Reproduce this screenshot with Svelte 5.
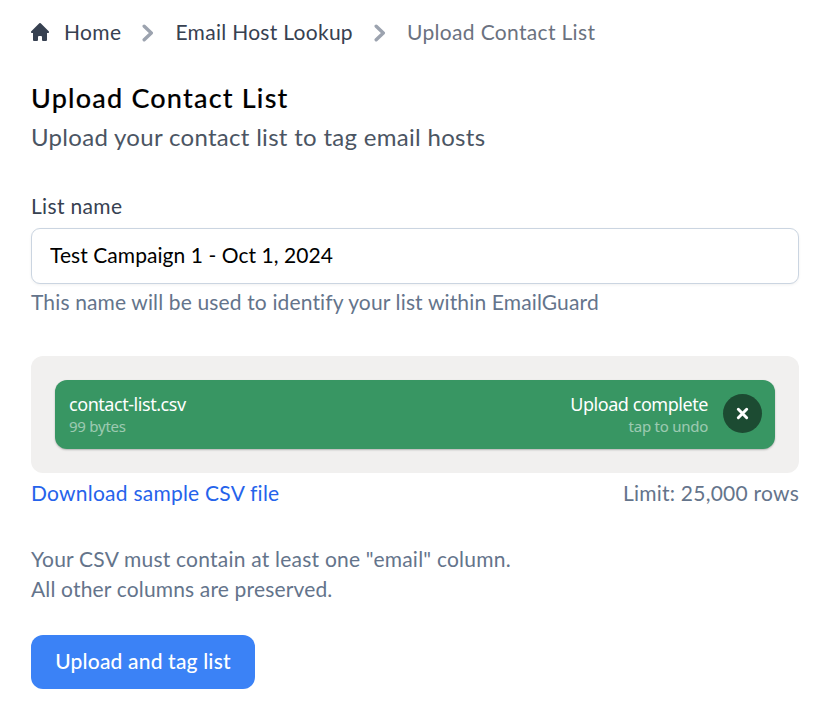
<script>
  let listName = $state('Test Campaign 1 - Oct 1, 2024');
</script>

<main>
  <nav aria-label="Breadcrumb">
    <svg class="home" viewBox="0 0 20 20" fill="currentColor"><path d="M10.707 1.293a1 1 0 0 0-1.414 0l-8 8A1 1 0 0 0 2 11h1v7a1 1 0 0 0 1 1h3a1 1 0 0 0 1-1v-3a1 1 0 0 1 1-1h2a1 1 0 0 1 1 1v3a1 1 0 0 0 1 1h3a1 1 0 0 0 1-1v-7h1a1 1 0 0 0 .707-1.707z" /></svg>
    <a class="c1" href="#home">Home</a>
    <svg class="chev" viewBox="0 0 12 18"><path d="M2.2 2.2 9.3 9 2.2 15.8" /></svg>
    <a class="c2" href="#lookup">Email Host Lookup</a>
    <svg class="chev" viewBox="0 0 12 18"><path d="M2.2 2.2 9.3 9 2.2 15.8" /></svg>
    <span class="c3">Upload Contact List</span>
  </nav>

  <h1>Upload Contact List</h1>
  <p class="sub">Upload your contact list to tag email hosts</p>

  <label for="list-name">List name</label>
  <input id="list-name" type="text" bind:value={listName} />
  <p class="help">This name will be used to identify your list within EmailGuard</p>

  <section class="drop">
    <div class="file">
      <div class="info">
        <span class="name">contact-list.csv</span>
        <span class="small">99 bytes</span>
      </div>
      <div class="info status">
        <span class="name">Upload complete</span>
        <span class="small">tap to undo</span>
      </div>
      <button class="remove" aria-label="Remove">
        <svg viewBox="0 0 14 14"><path d="M2.5 2.5 11.5 11.5M11.5 2.5 2.5 11.5" /></svg>
      </button>
    </div>
  </section>
  <div class="meta">
    <a class="dl" href="#sample">Download sample CSV file</a>
    <span class="limit">Limit: 25,000 rows</span>
  </div>

  <p class="note"><span class="n1">Your CSV must contain at least one "email" column.</span><br /><span class="n2">All other columns are preserved.</span></p>
  <button class="submit">Upload and tag list</button>
</main>

<style>
  :global(body) { background: #fff; }
  * { box-sizing: border-box; }
  main {
    width: 827px;
    height: 712px;
    padding: 17px 28px 0 31px;
    font: 21px/30px Lato, sans-serif;
    color: #64748b;
    white-space: nowrap;
  }
  h1, p { margin: 0; font-weight: 400; }
  a { text-decoration: none; color: inherit; }
  nav { display: flex; align-items: center; height: 30px; color: #374151; letter-spacing: 0.33px; }
  .home { width: 20px; height: 20px; margin: 0 14px 0 -1px; }
  .c1 { width: 58px; }
  .c2 { width: 178px; margin-left: -0.5px; letter-spacing: 0.29px; }
  .c3 { color: #6b7280; }
  .chev { width: 12px; height: 18px; margin: 1px 22px 0 20px; fill: none; stroke: #9ca3af; stroke-width: 3.4; stroke-linecap: round; stroke-linejoin: round; }
  .c2 + .chev { margin-right: 21.5px; }
  h1 { margin-top: 33px; font-size: 27px; line-height: 36px; font-weight: 500; letter-spacing: 1.2px; color: #000; -webkit-text-stroke: 0.15px #000; }
  .sub { margin-top: 3px; font-size: 24px; line-height: 36px; letter-spacing: 0.3px; color: #4b5563; }
  label { display: block; margin-top: 36px; letter-spacing: 0.33px; color: #374151; }
  input {
    display: block; width: 100%; height: 56px; margin-top: 7px; padding: 0 18px 3px;
    border: 1px solid #cbd5e1; border-radius: 9px; background: #fff; color: #000;
    font: inherit; letter-spacing: 0.06px; box-shadow: 0 1px 3px rgb(0 0 0 / 0.06); outline: none;
  }
  .help { margin-top: 3px; letter-spacing: 0.14px; }
  .drop { height: 117px; margin-top: 39px; padding: 24px; border-radius: 12px; background: #f1f0ef; }
  .file {
    display: flex; align-items: center; height: 69px; padding: 0 13px 2px 14px;
    border-radius: 12px; background: #389663; color: #fff;
    font-family: "Noto Sans", sans-serif; box-shadow: 0 1px 2px rgb(0 0 0 / 0.25);
  }
  .info { display: flex; flex: 1; flex-direction: column; padding-top: 1px; }
  .status { align-items: flex-end; margin-right: 15px; }
  .name { font-size: 18px; line-height: 24px; letter-spacing: -0.45px; }
  .small { font-size: 15px; line-height: 20px; letter-spacing: -0.25px; opacity: 0.5; }
  .remove { display: grid; place-items: center; width: 39px; height: 39px; padding: 0; border: 0; border-radius: 50%; background: #1c4b32; }
  .remove svg { width: 13px; height: 13px; fill: none; stroke: #fff; stroke-width: 3.2; stroke-linecap: round; }
  .meta { display: flex; justify-content: space-between; margin-top: 5px; letter-spacing: 0.24px; }
  .dl { color: #2563eb; }
  .note { margin-top: 36px; }
  .n1 { letter-spacing: 0.22px; }
  .n2 { letter-spacing: 0.16px; }
  .submit { display: block; width: 224px; height: 54px; margin-top: 31px; padding: 0 0 2px; border: 0; border-radius: 12px; background: #3b82f6; color: #fff; font: 500 21px/30px Lato, sans-serif; letter-spacing: 0.18px; }
</style>
